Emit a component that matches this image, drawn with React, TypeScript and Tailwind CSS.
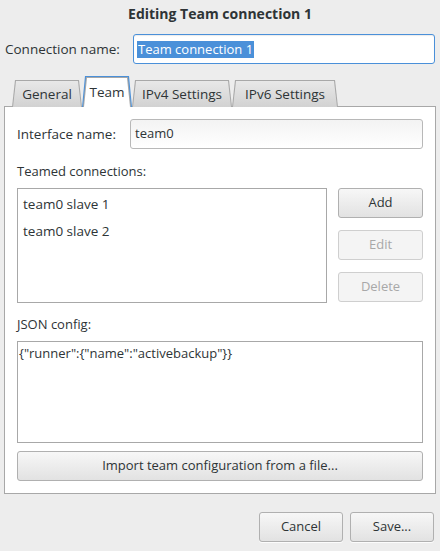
import React from "react";

const font = { fontFamily: '"Open Sans", "DejaVu Sans", sans-serif' };

function Button({
  label,
  disabled,
  className = "",
}: {
  label: string;
  disabled?: boolean;
  className?: string;
}) {
  return (
    <div
      className={
        "flex h-[30px] items-center justify-center rounded-[3px] border text-[13px] " +
        (disabled
          ? "border-[#cfcfcf] bg-[#f4f4f4] text-[#a8a8a8] "
          : "border-[#b0b0b0] bg-gradient-to-b from-[#f7f7f7] to-[#e2e2e2] text-[#2e3436] shadow-[0_1px_0_rgba(255,255,255,0.8)] ") +
        className
      }
    >
      {label}
    </div>
  );
}

// tabs keep GTK's slanted sides via clip-path
function Tab({ label, active, className = "" }: { label: string; active?: boolean; className?: string }) {
  if (active) {
    return (
      <div className={"relative z-10 h-[31px] bg-[#4a90d9] px-[1px] pt-[1px] [clip-path:polygon(3px_0,calc(100%-3px)_0,100%_100%,0_100%)] " + className}>
        <div className="flex h-full items-center bg-[#a8a8a8] px-[1px] pt-[1px] [clip-path:polygon(3px_0,calc(100%-3px)_0,100%_100%,0_100%)]">
          <div className="flex h-full w-full items-center justify-center bg-white pb-[1px] text-[13.5px] text-[#2e3436] [clip-path:polygon(3px_0,calc(100%-3px)_0,100%_100%,0_100%)]">
            {label}
          </div>
        </div>
      </div>
    );
  }
  return (
    <div className={"mt-[3px] h-[27px] bg-[#a8a8a8] px-[1px] pt-[1px] [clip-path:polygon(3px_0,calc(100%-3px)_0,100%_100%,0_100%)] " + className}>
      <div className="flex h-full items-center justify-center bg-gradient-to-b from-[#e8e8e8] to-[#d2d2d2] text-[13.5px] text-[#2e3436] [clip-path:polygon(3px_0,calc(100%-3px)_0,100%_100%,0_100%)]">
        {label}
      </div>
    </div>
  );
}

export default function App() {
  return (
    <div
      className="flex h-[551px] w-[440px] flex-col bg-[#ededed] text-[13px] text-[#2e3436]"
      style={font}
    >
      <div className="flex h-[27px] items-center justify-center text-[14px] font-bold">
        Editing Team connection 1
      </div>

      <div className="mt-[7px] flex items-center px-[5px]">
        <span className="w-[128px] text-[13.5px]">Connection name:</span>
        <div className="flex h-[30px] flex-1 items-center rounded-[3px] border border-[#4a90d9] bg-white px-[3px] shadow-[inset_0_1px_1px_rgba(0,0,0,0.08)]">
          <span className="bg-[#4a90d9] px-[1px] leading-[17px] text-white">Team connection 1</span>
        </div>
      </div>

      <div className="mt-[12px] flex items-end pl-[12px]">
        <Tab label="General" className="w-[70px]" />
        <Tab label="Team" active className="w-[50px]" />
        <Tab label="IPv4 Settings" className="w-[100px]" />
        <Tab label="IPv6 Settings" className="w-[106px]" />
      </div>

      <div className="mx-[4px] -mt-[1px] flex flex-col border border-[#a8a8a8] bg-white px-[12px] pt-[12px] pb-[12px]">
        <div className="flex items-center">
          <span className="w-[113px] text-[13.5px]">Interface name:</span>
          <div className="flex h-[30px] flex-1 items-center rounded-[3px] border border-[#b8b8b8] bg-gradient-to-b from-[#f3f3f3] to-white px-[4px]">
            team0
          </div>
        </div>

        <div className="mt-[14px] leading-[16px]">Teamed connections:</div>

        <div className="mt-[9px] flex gap-[11px]">
          <div className="flex h-[115px] flex-1 flex-col gap-[11px] border border-[#a8a8a8] px-[5px] pt-[7px] text-[13.5px] leading-[16px]">
            <span>team0 slave 1</span>
            <span>team0 slave 2</span>
          </div>
          <div className="flex w-[85px] flex-col gap-[12px]">
            <Button label="Add" />
            <Button label="Edit" disabled />
            <Button label="Delete" disabled />
          </div>
        </div>

        <div className="mt-[13px] leading-[16px]">JSON config:</div>

        <div className="mt-[9px] h-[102px] border border-[#a8a8a8] pt-[3px] pl-[1px] leading-[16px]">
          {'{"runner":{"name":"activebackup"}}'}
        </div>

        <Button label="Import team configuration from a file..." className="mt-[8px]" />
      </div>

      <div className="mt-[18px] flex justify-end gap-[7px] pr-[6px]">
        <Button label="Cancel" className="w-[84px]" />
        <Button label="Save..." className="w-[84px]" />
      </div>
    </div>
  );
}
